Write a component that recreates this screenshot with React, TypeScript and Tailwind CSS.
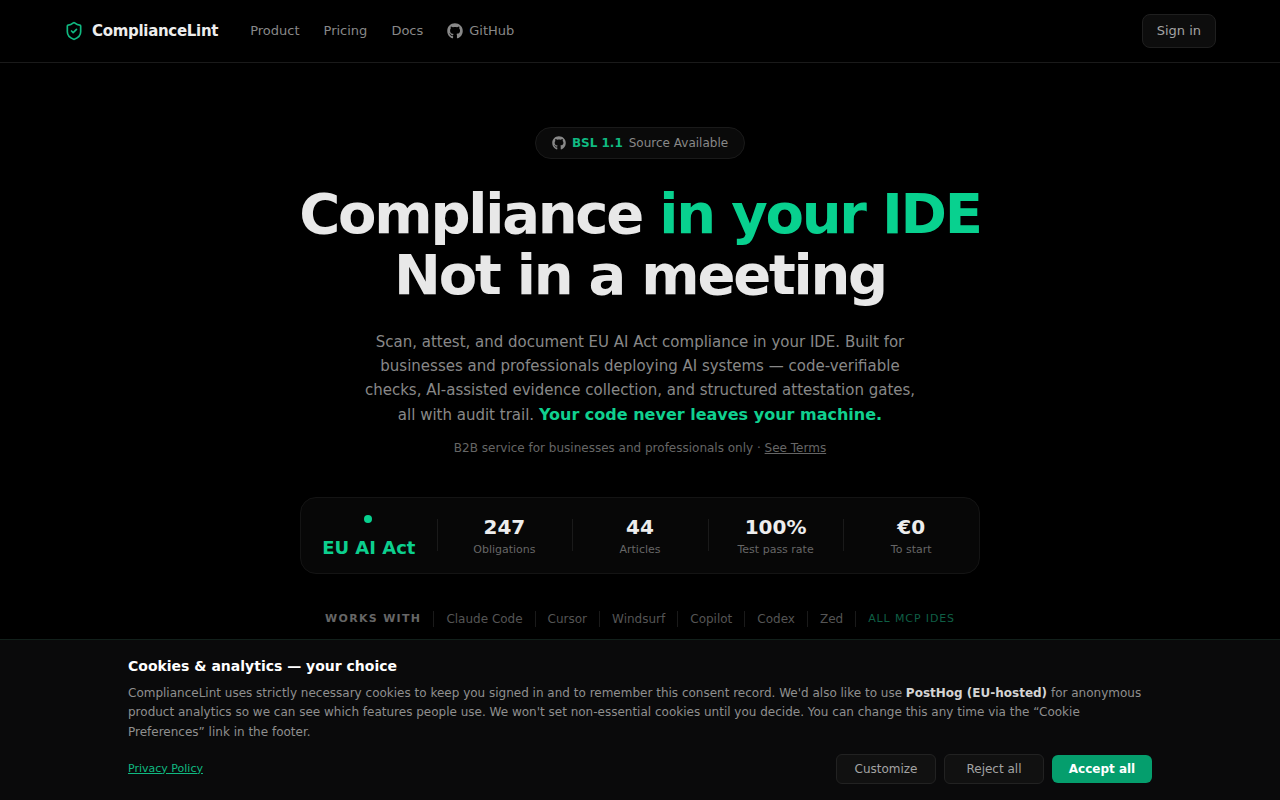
import { ShieldCheck } from 'lucide-react'
import { FaGithub } from 'react-icons/fa'

const stats = [
  { value: '247', label: 'Obligations' },
  { value: '44', label: 'Articles' },
  { value: '100%', label: 'Test pass rate' },
  { value: '€0', label: 'To start' },
]

const tools = ['Claude Code', 'Cursor', 'Windsurf', 'Copilot', 'Codex', 'Zed']

export default function App() {
  return (
    <div className="relative h-[800px] overflow-hidden bg-black font-['DejaVu_Sans',sans-serif] text-[#ededed]">
      {/* Nav */}
      <header className="h-[63px] border-b border-[#1a1a1a]">
        <div className="mx-auto flex h-[62px] max-w-[1152px] items-center justify-between">
          <div className="flex items-center">
            <div className="flex items-center gap-2">
              <ShieldCheck className="h-5 w-5 text-[#10b981]" strokeWidth={2} />
              <span className="text-[15px] font-bold tracking-[-0.02em]">ComplianceLint</span>
            </div>
            <nav className="ml-8 flex items-center gap-6 text-[13px] text-[#888888]">
              <a>Product</a>
              <a>Pricing</a>
              <a>Docs</a>
              <a className="flex items-center gap-1.5">
                <FaGithub className="h-4 w-4" />
                GitHub
              </a>
            </nav>
          </div>
          <button className="h-[34px] rounded-lg border border-[#1f1f1f] bg-[#0d0d0d] px-3.5 text-[13px] text-[#a3a3a3]">
            Sign in
          </button>
        </div>
      </header>

      {/* Hero */}
      <main className="flex flex-col items-center pt-16">
        <div className="flex h-8 items-center gap-1.5 rounded-full border border-[#1a1a1a] bg-[#0a0a0a] px-4 text-[12px]">
          <FaGithub className="h-3.5 w-3.5 text-[#888888]" />
          <span className="font-bold text-[#10b981]">BSL 1.1</span>
          <span className="text-[#888888]">Source Available</span>
        </div>

        <h1 className="mt-6 text-center text-[56px] leading-[61px] font-bold tracking-[-0.04em] text-[#e8e8e8]">
          Compliance <span className="text-[#08d18f]">in your IDE</span>
          <br />
          Not in a meeting
        </h1>

        <p className="mt-[24.7px] w-[560px] text-center text-[15px] leading-[24.375px] text-[#888888]">
          Scan, attest, and document EU AI Act compliance in your IDE. Built for businesses and professionals deploying AI systems — code-verifiable checks, AI-assisted evidence collection, and structured attestation gates, all with audit trail.{' '}
          <span className="text-[16px] font-semibold text-[#10d08f]">Your code never leaves your machine.</span>
        </p>

        <p className="mt-[11.4px] text-[12px] text-[#666666]">
          B2B service for businesses and professionals only · <a className="underline">See Terms</a>
        </p>

        <div className="mt-10 grid h-[77px] w-[680px] grid-cols-5 items-center rounded-2xl border border-[#141414] bg-[#070707]">
          <div className="flex flex-col items-center pt-1.5">
            <span className="mr-px h-2 w-2 rounded-full bg-[#08d18f]" />
            <span className="mt-[11px] text-[18px] leading-7 font-bold text-[#0ccf8e]">EU AI Act</span>
          </div>
          {stats.map((s) => (
            <div
              key={s.label}
              className="relative flex h-8 flex-col items-center justify-center before:absolute before:top-0 before:left-0 before:h-8 before:w-px before:bg-[#1a1a1a]"
            >
              <span className="text-[20px] leading-7 font-bold">{s.value}</span>
              <span className="mt-px text-[11px] leading-4 text-[#666666]">{s.label}</span>
            </div>
          ))}
        </div>

        <div className="mt-[37px] flex items-center text-[12px] text-[#555555]">
          <span className="pr-3 text-[11px] font-bold tracking-[0.12em] text-[#666666]">WORKS WITH</span>
          {tools.map((t) => (
            <span key={t} className="border-l border-[#1a1a1a] px-3 leading-4">{t}</span>
          ))}
          <span className="border-l border-[#1a1a1a] pl-3 text-[11px] leading-4 tracking-[0.08em] text-[#0f5f45]">ALL MCP IDES</span>
        </div>
      </main>

      {/* Cookie banner */}
      <div className="fixed inset-x-0 bottom-0 h-[161px] border-t border-[#12201b] bg-[#0a0a0b]">
        <div className="mx-auto max-w-[1024px] pt-4">
          <h2 className="text-[14px] leading-5 font-bold text-white">Cookies &amp; analytics — your choice</h2>
          <p className="mt-2 text-[12px] leading-[19.4px] text-[#8f8f8f]">
            ComplianceLint uses strictly necessary cookies to keep you signed in and to remember this consent record. We'd also like to use <strong className="font-bold text-[#d4d4d4]">PostHog (EU-hosted)</strong> for anonymous product analytics so we can see which features people use. We won't set non-essential cookies until you decide. You can change this any time via the “Cookie Preferences” link in the footer.
          </p>
          <div className="mt-[11.8px] flex items-center justify-between">
            <a className="text-[11px] text-[#10b981] underline">Privacy Policy</a>
            <div className="flex items-center gap-2">
              <button className="h-[30px] w-[100px] rounded-md border border-[#222222] bg-[#111111] text-[12px] text-[#a3a3a3]">Customize</button>
              <button className="h-[30px] w-[100px] rounded-md border border-[#222222] bg-[#111111] text-[12px] text-[#a3a3a3]">Reject all</button>
              <button className="h-7 w-[100px] rounded-md bg-[#059e6d] text-[12px] font-bold text-white">Accept all</button>
            </div>
          </div>
        </div>
      </div>
    </div>
  )
}
